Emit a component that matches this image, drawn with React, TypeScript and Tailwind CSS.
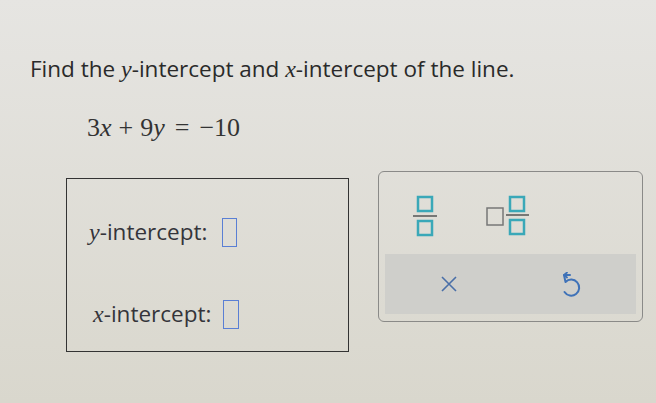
import React from "react";

function FracIcon() {
  return (
    <svg width="26" height="44" viewBox="0 0 26 44">
      <rect x="6" y="3" width="14" height="14" fill="none" stroke="#3aa8b8" strokeWidth="2.5" />
      <line x1="1" y1="22" x2="25" y2="22" stroke="#555" strokeWidth="1.5" />
      <rect x="6" y="27" width="14" height="14" fill="none" stroke="#3aa8b8" strokeWidth="2.5" />
    </svg>
  );
}

function MixedIcon() {
  return (
    <svg width="44" height="44" viewBox="0 0 44 44">
      <rect x="1" y="13" width="16" height="17" fill="none" stroke="#777" strokeWidth="1.5" />
      <rect x="24" y="2" width="14" height="14" fill="none" stroke="#3aa8b8" strokeWidth="2.5" />
      <line x1="20" y1="20" x2="43" y2="20" stroke="#555" strokeWidth="1.5" />
      <rect x="24" y="25" width="14" height="14" fill="none" stroke="#3aa8b8" strokeWidth="2.5" />
    </svg>
  );
}

export default function App() {
  const serif = { fontFamily: '"Liberation Serif", "Times New Roman", serif' };
  return (
    <div
      className="w-[656px] h-[403px] overflow-hidden bg-gradient-to-b from-[#e6e5e2] to-[#d9d7cd] text-[#2a2a2a] relative"
      style={{ fontFamily: '"Open Sans", "Noto Sans", sans-serif' }}
    >
      <div className="pt-[52px] pl-[30px]">
        <div className="text-[22.5px] leading-[34px] tracking-[0px]">
          Find the <span className="italic text-[24px]" style={serif}>y</span>-intercept and{" "}
          <span className="italic text-[24px]" style={serif}>x</span>-intercept of the line.
        </div>
        <div className="mt-[27px] ml-[57px] text-[26px] leading-[30px] text-[#333]" style={serif}>
          3<span className="italic">x</span>
          <span className="mx-[7px]">+</span>9<span className="italic">y</span>
          <span className="mx-[10px]">=</span>−10
        </div>
      </div>
      <div className="flex mt-[35px]">
        <div className="ml-[66px] w-[283px] h-[174px] border-[1.5px] border-[#333] flex flex-col pt-[38px] gap-[52px]">
          <div className="flex items-center h-[30px] pl-[22px] text-[22.5px] text-[#34343a]">
            <span className="italic text-[24px]" style={serif}>y</span>
            <span>-intercept:</span>
            <span className="ml-[15px] w-[15px] h-[29px] border-[1.5px] border-[#5a7fd4] inline-block" />
          </div>
          <div className="flex items-center h-[30px] pl-[26px] text-[22.5px] text-[#34343a]">
            <span className="italic text-[24px]" style={serif}>x</span>
            <span>-intercept:</span>
            <span className="ml-[12px] w-[16px] h-[29px] border-[1.5px] border-[#5a7fd4] inline-block" />
          </div>
        </div>
        <div className="ml-[29px] -mt-[7px] w-[265px] h-[151px] border-[1.5px] border-[#8a8a88] rounded-[6px] flex flex-col">
          <div className="flex items-start pt-[22px] h-[82px]">
            <div className="ml-[33px]">
              <FracIcon />
            </div>
            <div className="ml-[48px] mt-[1px]">
              <MixedIcon />
            </div>
          </div>
          <div className="mx-[6px] h-[60px] bg-[#cfcfcb] flex items-center">
            <svg className="ml-[56px]" width="16" height="16" viewBox="0 0 16 16">
              <path d="M1 1 L15 15 M15 1 L1 15" stroke="#4a6fa8" strokeWidth="1.6" />
            </svg>
            <svg className="ml-[102px] mt-[2px]" width="22" height="26" viewBox="0 0 22 26">
              <path
                d="M11 3 L5 3 L6.5 10 M6.5 10 A8 8 0 1 1 5.5 20"
                fill="none"
                stroke="#3f72b8"
                strokeWidth="2"
                strokeLinecap="round"
                strokeLinejoin="round"
              />
              <path d="M8 0.5 L5 3 L8 5.5" fill="none" stroke="#3f72b8" strokeWidth="1.8" strokeLinecap="round" strokeLinejoin="round" />
            </svg>
          </div>
        </div>
      </div>
    </div>
  );
}
